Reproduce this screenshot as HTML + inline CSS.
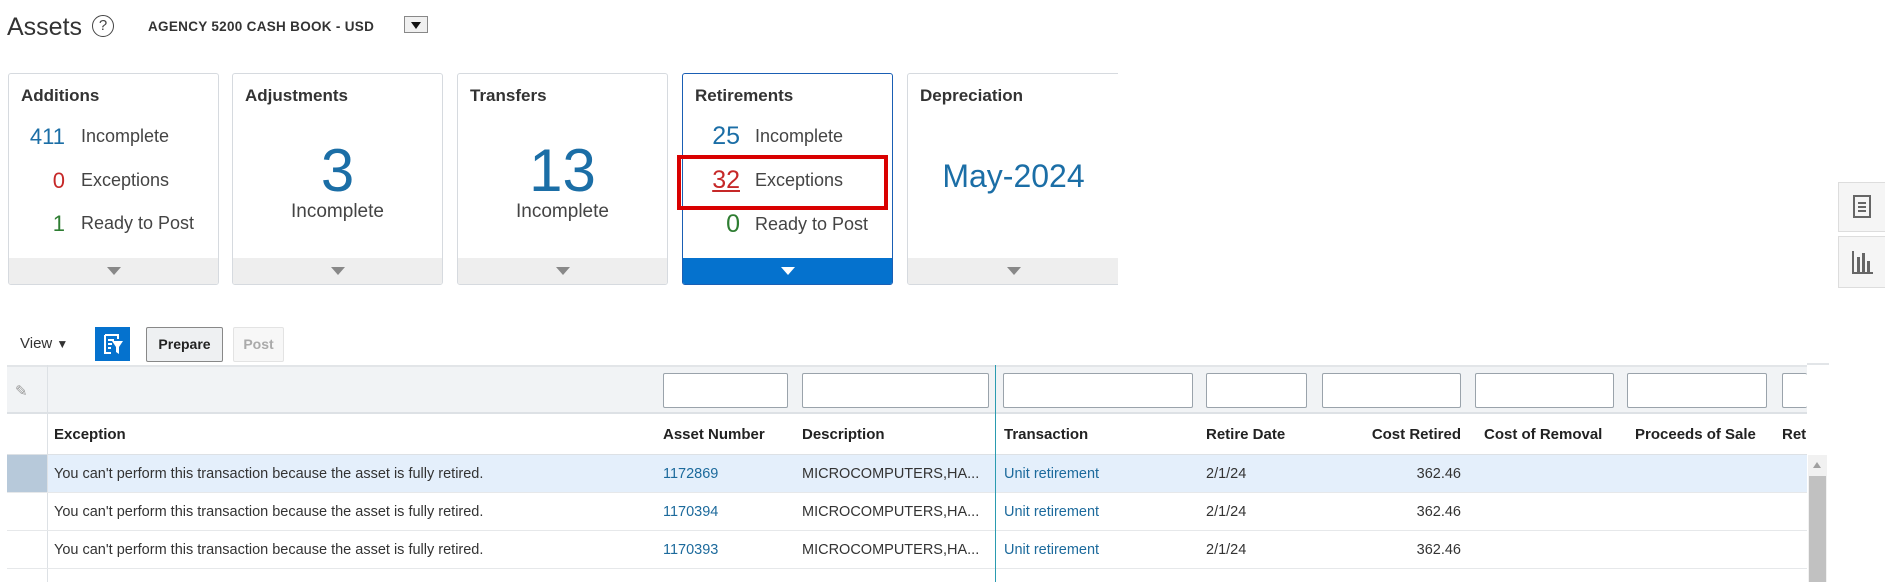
<!DOCTYPE html>
<html><head><meta charset="utf-8"><style>
*{box-sizing:border-box;margin:0;padding:0}
body{width:1885px;height:582px;overflow:hidden;background:#fff;font-family:"Liberation Sans",Arial,sans-serif;color:#333;position:relative}
.a{position:absolute;white-space:nowrap}
.card{position:absolute;top:73px;width:211px;height:212px;border:1px solid #d6dadf;border-radius:3px;background:#fff;overflow:hidden}
.card .t{position:absolute;left:12px;top:12px;font-weight:bold;font-size:17px;color:#333}
.card .f{position:absolute;left:0;right:0;bottom:0;height:26px;background:#eeeeee}
.card .f:after{content:"";position:absolute;left:50%;top:9px;margin-left:-7px;border-left:7px solid transparent;border-right:7px solid transparent;border-top:8px solid #888}
.card .f.w:after{border-top-color:#fff}
.n{position:absolute;font-size:22px;text-align:right;width:50px}
.l{position:absolute;font-size:18px;color:#444}
.big{position:absolute;left:0;right:0;text-align:center;font-size:60px;color:#1b6ea6;top:128px}
.inc{position:absolute;left:0;right:0;text-align:center;font-size:19px;color:#444;top:130px}
.fi{position:absolute;top:373px;height:35px;border:1px solid #9aa3ab;border-radius:2px;background:#fff}
.h{position:absolute;top:426px;font-weight:bold;font-size:15px;color:#222}
.r{position:absolute;font-size:14.5px;color:#333}
.lk{color:#1c6a9c}
</style></head><body>
<div class="a" style="left:7px;top:13px;font-size:25px;color:#333">Assets</div>
<div class="a" style="left:92px;top:15px;width:22px;height:22px;border:1.5px solid #444;border-radius:50%;text-align:center;font-size:15px;line-height:19px;color:#444">?</div>
<div class="a" style="left:148px;top:19px;font-size:13.5px;font-weight:bold;color:#333;letter-spacing:0.3px">AGENCY 5200 CASH BOOK - USD</div>
<div class="a" style="left:404px;top:16px;width:24px;height:17px;border:1px solid #888;background:#f0f0f0"><div style="position:absolute;left:6px;top:5px;border-left:5px solid transparent;border-right:5px solid transparent;border-top:7px solid #111"></div></div>

<div class="card" style="left:8px"><div class="t">Additions</div>
<div class="n" style="left:0;top:50px;color:#1b6ea6;width:56px">411</div><div class="l" style="left:72px;top:52px">Incomplete</div>
<div class="n" style="left:0;top:94px;color:#c62828;width:56px">0</div><div class="l" style="left:72px;top:96px">Exceptions</div>
<div class="n" style="left:0;top:137px;color:#2e7d32;width:56px">1</div><div class="l" style="left:72px;top:139px">Ready to Post</div>
<div class="f"></div></div>
<div class="card" style="left:232px"><div class="t">Adjustments</div><div class="big" style="top:62px">3</div><div class="inc" style="top:127px">Incomplete</div><div class="f"></div></div>
<div class="card" style="left:457px"><div class="t">Transfers</div><div class="big" style="top:62px">13</div><div class="inc" style="top:127px">Incomplete</div><div class="f"></div></div>
<div class="card" style="left:682px;border-color:#1a5fb4"><div class="t">Retirements</div>
<div class="n" style="left:0;top:48px;color:#1b6ea6;width:57px;font-size:25px">25</div><div class="l" style="left:72px;top:52px">Incomplete</div>
<div class="n" style="left:0;top:92px;color:#c62828;width:57px;font-size:25px;text-decoration:underline">32</div><div class="l" style="left:72px;top:96px">Exceptions</div>
<div class="n" style="left:0;top:136px;color:#2e7d32;width:57px;font-size:25px">0</div><div class="l" style="left:72px;top:140px">Ready to Post</div>
<div class="f w" style="background:#0572ce"></div></div>
<div class="card" style="left:907px;width:230px"><div class="t">Depreciation</div><div class="a" style="left:0;width:211px;text-align:center;top:84px;font-size:32px;color:#1b6ea6">May-2024</div><div class="f" style="width:211px"></div></div>
<div class="a" style="left:1118px;top:60px;width:30px;height:240px;background:#fff"></div>
<div class="a" style="left:677px;top:155px;width:211px;height:55px;border:4px solid #d90000"></div>

<div class="a" style="left:1838px;top:182px;width:47px;height:50px;border:1px solid #ddd;border-right:none;background:#f5f5f5">
<svg width="46" height="48" viewBox="0 0 46 48"><rect x="15" y="13" width="16" height="21" fill="none" stroke="#666" stroke-width="2"/><path d="M19 20h8M19 24h8M19 28h8" stroke="#666" stroke-width="2"/></svg></div>
<div class="a" style="left:1838px;top:236px;width:47px;height:52px;border:1px solid #ddd;border-right:none;background:#f5f5f5">
<svg width="46" height="50" viewBox="0 0 46 50"><path d="M14 14v22h20" fill="none" stroke="#666" stroke-width="2"/><rect x="18" y="20" width="3" height="15" fill="#666"/><rect x="23" y="16" width="3" height="19" fill="#666"/><rect x="28" y="24" width="3" height="11" fill="#666"/></svg></div>

<div class="a" style="left:20px;top:335px;font-size:15px;color:#333">View <span style="font-size:12px">▼</span></div>
<div class="a" style="left:95px;top:327px;width:35px;height:34px;background:#0572ce">
<svg width="35" height="34" viewBox="0 0 35 34"><path d="M10 8h13v4M10 8v18h6M13 13h6M13 17h4M13 21h3" fill="none" stroke="#fff" stroke-width="2"/><path d="M17 14h11l-4 6v7l-3-2v-5z" fill="#fff"/></svg></div>
<div class="a" style="left:146px;top:327px;width:77px;height:35px;border:1px solid #888;border-radius:2px;background:#eef0f2;font-weight:bold;font-size:14px;text-align:center;line-height:33px;color:#222">Prepare</div>
<div class="a" style="left:233px;top:327px;width:51px;height:35px;border:1px solid #e3e3e3;border-radius:2px;background:#f7f7f7;font-weight:bold;font-size:14px;text-align:center;line-height:33px;color:#aaa">Post</div>

<div class="a" style="left:7px;top:365px;width:1800px;height:49px;background:#f1f3f5;border-top:2px solid #e2e5e8;border-bottom:2px solid #dde1e5"></div>
<div class="a" style="left:1807px;top:363px;width:22px;height:2px;background:#e2e5e8"></div>
<div class="a" style="left:47px;top:365px;width:1px;height:217px;background:#dde1e5"></div>
<div class="a" style="left:15px;top:382px;font-size:15px;color:#999">✎</div>
<div class="fi" style="left:663px;width:125px"></div>
<div class="fi" style="left:802px;width:187px"></div>
<div class="fi" style="left:1003px;width:190px"></div>
<div class="fi" style="left:1206px;width:101px"></div>
<div class="fi" style="left:1322px;width:139px"></div>
<div class="fi" style="left:1475px;width:139px"></div>
<div class="fi" style="left:1627px;width:140px"></div>
<div class="fi" style="left:1782px;width:25px;border-right:none"></div>

<div class="h" style="left:54px">Exception</div>
<div class="h" style="left:663px">Asset Number</div>
<div class="h" style="left:802px">Description</div>
<div class="h" style="left:1004px">Transaction</div>
<div class="h" style="left:1206px">Retire Date</div>
<div class="h" style="left:1340px;width:121px;text-align:right">Cost Retired</div>
<div class="h" style="left:1484px">Cost of Removal</div>
<div class="h" style="left:1635px">Proceeds of Sale</div>
<div class="h" style="left:1782px;width:25px;overflow:hidden">Ret</div>

<div class="a" style="left:7px;top:454px;width:1800px;height:1px;background:#dde1e5"></div>
<div class="a" style="left:48px;top:455px;width:1759px;height:37px;background:#e4effb"></div>
<div class="a" style="left:7px;top:455px;width:40px;height:37px;background:#b7c9da"></div>
<div class="a" style="left:7px;top:492px;width:1800px;height:1px;background:#e6e8ea"></div>
<div class="a" style="left:7px;top:530px;width:1800px;height:1px;background:#e6e8ea"></div>
<div class="a" style="left:7px;top:568px;width:1800px;height:1px;background:#e6e8ea"></div>
<div class="a" style="left:995px;top:365px;width:1px;height:217px;background:#2a9bb0"></div>

<div class="r" style="left:54px;top:466px">You can't perform this transaction because the asset is fully retired.</div>
<div class="r lk" style="left:663px;top:466px">1172869</div>
<div class="r" style="left:802px;top:466px">MICROCOMPUTERS,HA...</div>
<div class="r lk" style="left:1004px;top:466px">Unit retirement</div>
<div class="r" style="left:1206px;top:466px">2/1/24</div>
<div class="r" style="left:1380px;width:81px;text-align:right;top:466px">362.46</div>

<div class="r" style="left:54px;top:504px">You can't perform this transaction because the asset is fully retired.</div>
<div class="r lk" style="left:663px;top:504px">1170394</div>
<div class="r" style="left:802px;top:504px">MICROCOMPUTERS,HA...</div>
<div class="r lk" style="left:1004px;top:504px">Unit retirement</div>
<div class="r" style="left:1206px;top:504px">2/1/24</div>
<div class="r" style="left:1380px;width:81px;text-align:right;top:504px">362.46</div>

<div class="r" style="left:54px;top:542px">You can't perform this transaction because the asset is fully retired.</div>
<div class="r lk" style="left:663px;top:542px">1170393</div>
<div class="r" style="left:802px;top:542px">MICROCOMPUTERS,HA...</div>
<div class="r lk" style="left:1004px;top:542px">Unit retirement</div>
<div class="r" style="left:1206px;top:542px">2/1/24</div>
<div class="r" style="left:1380px;width:81px;text-align:right;top:542px">362.46</div>

<div class="a" style="left:1808px;top:455px;width:19px;height:127px;background:#f1f1f1"></div>
<div class="a" style="left:1813px;top:462px;border-left:4px solid transparent;border-right:4px solid transparent;border-bottom:6px solid #a0a0a0"></div>
<div class="a" style="left:1809px;top:476px;width:17px;height:106px;background:#c1c1c1"></div>
</body></html>
